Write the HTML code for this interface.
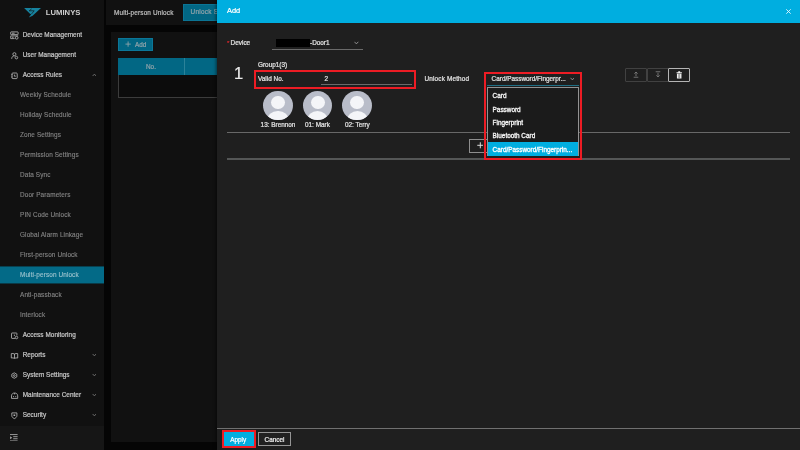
<!DOCTYPE html>
<html><head><meta charset="utf-8">
<style>
*{box-sizing:border-box;margin:0;padding:0}
html,body{width:800px;height:450px;overflow:hidden;background:#050505;font-family:"Liberation Sans",sans-serif;font-weight:normal;-webkit-text-stroke:0.22px currentColor;color:#ddd}
.abs{position:absolute;white-space:nowrap}
.t{position:absolute;white-space:nowrap;font-size:6.4px;line-height:10px;height:10px}
#side{position:absolute;left:0;top:0;width:104px;height:450px;background:#111111}
#sidefoot{position:absolute;left:0;top:425.5px;width:104px;height:24.5px;background:#161616}
.mi{position:absolute;left:0;width:104px;height:17px;line-height:16.8px;font-size:6.4px;color:#c4c4c4;white-space:nowrap}
.mi.top{padding-left:22.7px;letter-spacing:0.05px}
.mi.sub{padding-left:20px;color:#858585;letter-spacing:0.12px;-webkit-text-stroke:0.12px currentColor}
.mi.act{color:#9cc3ce}
.mi svg.ic{position:absolute;left:9.7px;top:4px;width:9px;height:9px;fill:none;stroke:#b4b4b4;stroke-width:0.85}
.mi svg.cv{position:absolute;left:91.6px;top:6.4px;width:4.8px;height:4px;fill:none;stroke:#777;stroke-width:1.1}
#topbar{position:absolute;left:106px;top:0;width:694px;height:24.6px;background:#111111}
#panel{position:absolute;left:111px;top:32px;width:689px;height:410px;background:#111111}
#modal{position:absolute;left:217px;top:0;width:583px;height:450px;background:#1f1f1f;box-shadow:-1px 0 3px rgba(0,0,0,0.5)}
#mhead{position:absolute;left:0;top:0;width:583px;height:22.5px;background:#00aee0}
.hl{position:absolute;height:1px;background:#5e5e5e}
.red{position:absolute;border:2px solid #ed1c24}
.av{position:absolute;width:29.5px;height:29.5px;border-radius:50%;background:#b9bdc9;overflow:hidden}
.av i{position:absolute;display:block;background:#f4f5f8;border-radius:50%}
.av i.h{left:7.8px;top:5px;width:14px;height:13.8px}
.av i.b{left:4.2px;top:20px;width:21.2px;height:19px}
.opt{position:absolute;left:4.8px;color:#f6f6f6;-webkit-text-stroke:0.3px currentColor;font-size:6.4px;line-height:10px;white-space:nowrap}
.ib{position:absolute;top:67.5px;height:14px;border:1px solid #414141;border-radius:1px}
#wrap{position:absolute;left:0;top:0;width:800px;height:450px;will-change:transform}
</style></head><body><div id="wrap">
<div id="side">
 <svg class="abs" style="left:24px;top:8px" width="18" height="10" viewBox="0 0 18 10"><path d="M0.1 0 L17 0 L8.6 7.7 L4.8 9.4 L7.2 6.3 L6 5.8 Z" fill="#17839f"/><path d="M7.6 0.9 L5.2 2.8 L10.2 2.8 L7.3 6.2" fill="none" stroke="#111" stroke-width="0.65"/></svg>
 <div class="abs" style="left:45.8px;top:8px;font-size:7.7px;line-height:9px;color:#cfcfcf;font-weight:bold;-webkit-text-stroke:0">LUMINYS</div>
 <div class="mi top" style="top:26.5px"><svg class="ic" viewBox="0 0 9 9"><rect x="0.7" y="0.9" width="7.4" height="2.7" rx="0.4"/><path d="M2 2.25 H4.6"/><path d="M4.6 7.6 H0.7 V4.9 H8.1 V5"/><path d="M2 6.25 H3.6"/><circle cx="6.7" cy="6.8" r="1.35"/></svg>Device Management</div>
 <div class="mi top" style="top:46.5px"><svg class="ic" viewBox="0 0 9 9"><circle cx="4.4" cy="3.2" r="1.55"/><path d="M1.7 7.8 C1.7 5.8 3 4.9 4.4 4.9"/><circle cx="6.4" cy="6.6" r="1.3"/></svg>User Management</div>
 <div class="mi top" style="top:66.5px"><svg class="ic" viewBox="0 0 9 9"><rect x="2" y="2" width="5.2" height="5.6" rx="0.8"/><path d="M1.4 3.6 H2.6 M1.4 6 H2.6 M4.4 3.6 V5.2 H5.8"/></svg>Access Rules<svg class="cv" viewBox="0 0 6 5"><path d="M0.8 3.8 L3 1.4 L5.2 3.8"/></svg></div>
 <div class="mi sub" style="top:86.5px">Weekly Schedule</div>
 <div class="mi sub" style="top:106.5px">Holiday Schedule</div>
 <div class="mi sub" style="top:126.5px">Zone Settings</div>
 <div class="mi sub" style="top:146.5px">Permission Settings</div>
 <div class="mi sub" style="top:166.5px">Data Sync</div>
 <div class="mi sub" style="top:186.5px">Door Parameters</div>
 <div class="mi sub" style="top:206.5px">PIN Code Unlock</div>
 <div class="mi sub" style="top:226.5px">Global Alarm Linkage</div>
 <div class="mi sub" style="top:246.5px">First-person Unlock</div>
 <div class="abs" style="left:0;top:266px;width:104px;height:17px;background:#036a87;transform:translateY(0.45px)"></div>
 <div class="mi sub act" style="top:266.5px">Multi-person Unlock</div>
 <div class="mi sub" style="top:286.5px">Anti-passback</div>
 <div class="mi sub" style="top:306.5px">Interlock</div>
 <div class="mi top" style="top:326.5px"><svg class="ic" viewBox="0 0 9 9"><path d="M5.2 7.4 H2 Q1.5 7.4 1.5 6.9 V2.5 Q1.5 2 2 2 H6.4 Q6.9 2 6.9 2.5 V4.4"/><circle cx="6.5" cy="6.5" r="1.25"/><path d="M4.4 3.6 V5"/></svg>Access Monitoring</div>
 <div class="mi top" style="top:346.5px"><svg class="ic" viewBox="0 0 9 9"><path d="M4.5 3 C3.6 2.4 2.4 2.4 1.3 2.6 V7 C2.4 6.8 3.6 6.8 4.5 7.4 C5.4 6.8 6.6 6.8 7.7 7 V2.6 C6.6 2.4 5.4 2.4 4.5 3 Z M4.5 3 V7.4"/></svg>Reports<svg class="cv" viewBox="0 0 6 5"><path d="M0.8 1.2 L3 3.6 L5.2 1.2"/></svg></div>
 <div class="mi top" style="top:366.5px"><svg class="ic" viewBox="0 0 9 9"><path d="M4.3 1.8 L6.8 3.2 V5.9 L4.3 7.3 L1.8 5.9 V3.2 Z"/><circle cx="4.3" cy="4.55" r="0.9"/></svg>System Settings<svg class="cv" viewBox="0 0 6 5"><path d="M0.8 1.2 L3 3.6 L5.2 1.2"/></svg></div>
 <div class="mi top" style="top:386.5px"><svg class="ic" viewBox="0 0 9 9"><path d="M1.5 7.4 V4.9 C1.5 3 2.9 2 4.6 2 C6.3 2 7.7 3 7.7 4.9 V7.4 Z"/><path d="M3 5.6 H4 M5.2 5.6 H6.2 M4.6 2 V3.4"/></svg>Maintenance Center<svg class="cv" viewBox="0 0 6 5"><path d="M0.8 1.2 L3 3.6 L5.2 1.2"/></svg></div>
 <div class="mi top" style="top:406.5px"><svg class="ic" viewBox="0 0 9 9"><path d="M1.8 1.9 H6.9 V4.6 C6.9 6.2 5.6 7 4.35 7.6 C3.1 7 1.8 6.2 1.8 4.6 Z"/><rect x="3.5" y="3.5" width="1.7" height="1.5" fill="#b4b4b4" stroke="none"/></svg>Security<svg class="cv" viewBox="0 0 6 5"><path d="M0.8 1.2 L3 3.6 L5.2 1.2"/></svg></div>
 <div id="sidefoot"><svg class="abs" style="left:10.3px;top:8.4px" width="7.6" height="7.6" viewBox="0 0 8 8" fill="none" stroke="#b0b0b0" stroke-width="0.9"><path d="M0 0.6 H8 M3.4 2.8 H8 M3.4 5 H8 M0 7.3 H8"/><path d="M0.2 2.4 L2.2 3.9 L0.2 5.4 Z" fill="#b8b8b8" stroke="none"/></svg></div>
</div>
<div id="topbar">
 <div class="t" style="left:8px;top:7.5px;color:#bdbdbd;letter-spacing:0.16px">Multi-person Unlock</div>
 <div class="abs" style="left:77.4px;top:4.4px;width:40px;height:16.4px;background:#026784;border:1px solid #0b7494;color:#8fa3aa;font-size:6.4px;line-height:14.6px;padding-left:6.2px;letter-spacing:0.25px;overflow:hidden">Unlock Settings</div>
</div>
<div id="panel">
 <div class="abs" style="left:6.7px;top:6px;width:35.6px;height:13px;background:#026784;border:1px solid #0b7799"></div>
 <div class="t" style="left:24px;top:7.5px;color:#8fa3aa">Add</div>
 <svg class="abs" style="left:14px;top:9.4px" width="6.2" height="6.2" viewBox="0 0 7 7" stroke="#8fa3aa" stroke-width="1"><path d="M3.5 0.5 V6.5 M0.5 3.5 H6.5"/></svg>
 <div class="abs" style="left:6.7px;top:26px;width:120px;height:17.5px;background:#026784"></div>
 <div class="abs" style="left:73px;top:26px;width:1px;height:17.5px;background:#2b8299"></div>
 <div class="abs" style="left:6.7px;top:43px;width:120px;height:23px;border:1px solid #3c3c3c;border-top:none;background:#0c0c0c"></div>
 <div class="t" style="left:35px;top:30px;color:#8fa3aa">No.</div>
</div>
<div id="modal">
 <div id="mhead">
  <div class="abs" style="left:10px;top:5.6px;font-size:7.4px;line-height:10px;color:#fff">Add</div>
  <svg class="abs" style="left:569px;top:9px" width="5" height="5" viewBox="0 0 5 5" stroke="#e8f8ff" stroke-width="0.9"><path d="M0.3 0.3 L4.7 4.7 M4.7 0.3 L0.3 4.7"/></svg>
 </div>
 <!-- device row -->
 <div class="t" style="left:10px;top:38.4px;color:#e8262d;font-size:6.2px;-webkit-text-stroke:0.1px">*</div>
 <div class="t" style="left:13.6px;top:38.4px;color:#e2e2e2">Device</div>
 <div class="abs" style="left:59px;top:39px;width:33.5px;height:8px;background:#000"></div>
 <div class="t" style="left:93px;top:38.4px;color:#e2e2e2">-Door1</div>
 <svg class="abs" style="left:136.8px;top:41.2px" width="4.8" height="4" viewBox="0 0 6 5" fill="none" stroke="#aaa" stroke-width="1"><path d="M0.6 1 L3 3.6 L5.4 1"/></svg>
 <div class="hl" style="left:55px;top:49.2px;width:91px;background:#6a6a6a"></div>
 <!-- group -->
 <div class="abs" style="left:17px;top:63.5px;font-size:16.5px;line-height:18px;color:#ececec;font-weight:normal">1</div>
 <div class="t" style="left:41px;top:59.5px;color:#e2e2e2">Group1(3)</div>
 <div class="red" style="left:37px;top:70px;width:162px;height:18.7px"></div>
 <div class="t" style="left:41px;top:73.6px;color:#e2e2e2">Valid No.</div>
 <div class="t" style="left:107.6px;top:73.6px;color:#e2e2e2">2</div>
 <div class="hl" style="left:103.6px;top:84px;width:91px;background:#6a6a6a"></div>
 <div class="t" style="left:207.5px;top:73.6px;color:#e2e2e2;letter-spacing:0.16px">Unlock Method</div>
 <!-- avatars -->
 <div class="av" style="left:46.2px;top:90.6px"><i class="h"></i><i class="b"></i></div>
 <div class="av" style="left:85.8px;top:90.6px"><i class="h"></i><i class="b"></i></div>
 <div class="av" style="left:125.4px;top:90.6px"><i class="h"></i><i class="b"></i></div>
 <div class="t" style="left:43.6px;top:120px;color:#e2e2e2">13: Brennon</div>
 <div class="t" style="left:88px;top:120px;color:#e2e2e2">01: Mark</div>
 <div class="t" style="left:128px;top:120px;color:#e2e2e2">02: Terry</div>
 <div class="hl" style="left:10px;top:132px;width:563px;background:#686868"></div>
 <div class="hl" style="left:10px;top:158px;width:563px;height:2px;background:#545656"></div>
 <!-- add-group button -->
 <div class="abs" style="left:252px;top:139px;width:40px;height:13.6px;border:1px solid #8e8e8e;background:#1f1f1f"></div>
 <svg class="abs" style="left:259.5px;top:142px" width="6.6" height="6.6" viewBox="0 0 7 7" stroke="#e6e6e6" stroke-width="1"><path d="M3.5 0.3 V6.7 M0.3 3.5 H6.7"/></svg>
 <!-- icon buttons -->
 <div class="ib" style="left:408px;width:22px"></div>
 <div class="ib" style="left:429.5px;width:22.5px"></div>
 <div class="ib" style="left:451px;width:22.4px;border-color:#b4b4b4"></div>
 <svg class="abs" style="left:416px;top:71px" width="6" height="7" viewBox="0 0 7 8" fill="none" stroke="#7e7e7e" stroke-width="1"><path d="M3.5 6 V1.2 M1.6 3 L3.5 1.1 L5.4 3 M0.8 7.2 H6.2"/></svg>
 <svg class="abs" style="left:437.8px;top:71px" width="6" height="7" viewBox="0 0 7 8" fill="none" stroke="#7e7e7e" stroke-width="1"><path d="M3.5 2 V6.8 M1.6 5 L3.5 6.9 L5.4 5 M0.8 0.8 H6.2"/></svg>
 <svg class="abs" style="left:459px;top:70.8px" width="6.4" height="7.8" viewBox="0 0 7 9"><path d="M2.4 0.4 H4.6 V1.3 H6.6 V2.5 H0.4 V1.3 H2.4 Z M0.9 3.1 H6.1 V8.6 H0.9 Z" fill="#f2f2f2"/><path d="M2.4 4.4 H4.6 M2.4 5.8 H4.6 M2.4 7.2 H4.6" stroke="#1f1f1f" stroke-width="0.6"/></svg>
 <!-- select -->
 <div class="t" style="left:274.6px;top:73.6px;color:#e2e2e2">Card/Password/Fingerpr...</div>
 <svg class="abs" style="left:352.6px;top:76.8px" width="4.8" height="4" viewBox="0 0 6 5" fill="none" stroke="#aaa" stroke-width="1"><path d="M0.6 1 L3 3.6 L5.4 1"/></svg>
 <div class="hl" style="left:270px;top:84.5px;width:91.6px;background:#1f6f85"></div>
 <div class="abs" style="left:269.8px;top:86.8px;width:92px;height:69.6px;background:#1b1b1b;border:1px solid #939393;border-bottom:none">
  <div class="opt" style="top:3.4px">Card</div>
  <div class="opt" style="top:16.8px">Password</div>
  <div class="opt" style="top:30.2px">Fingerprint</div>
  <div class="opt" style="top:43.6px">Bluetooth Card</div>
  <div class="abs" style="left:0;top:54.2px;width:90px;height:14.4px;background:#00aee0"></div>
  <div class="opt" style="top:57.4px;color:#fff">Card/Password/Fingerprin...</div>
 </div>
 <div class="red" style="left:266.8px;top:72px;width:98.2px;height:87.8px;border-width:2.2px"></div>
 <!-- footer -->
 <div class="hl" style="left:0;top:427.6px;width:583px;height:1.2px;background:#707070"></div>
 <div class="abs" style="left:7px;top:432.4px;width:30px;height:13.2px;background:#00aee0"></div>
 <div class="t" style="left:13.2px;top:434.6px;color:#fff">Apply</div>
 <div class="red" style="left:5px;top:430.3px;width:33.7px;height:17.3px"></div>
 <div class="abs" style="left:40.8px;top:432.2px;width:33px;height:13.6px;border:1px solid #959595;background:#212121"></div>
 <div class="t" style="left:47.6px;top:434.6px;color:#ececec">Cancel</div>
</div>
</div></body></html>
